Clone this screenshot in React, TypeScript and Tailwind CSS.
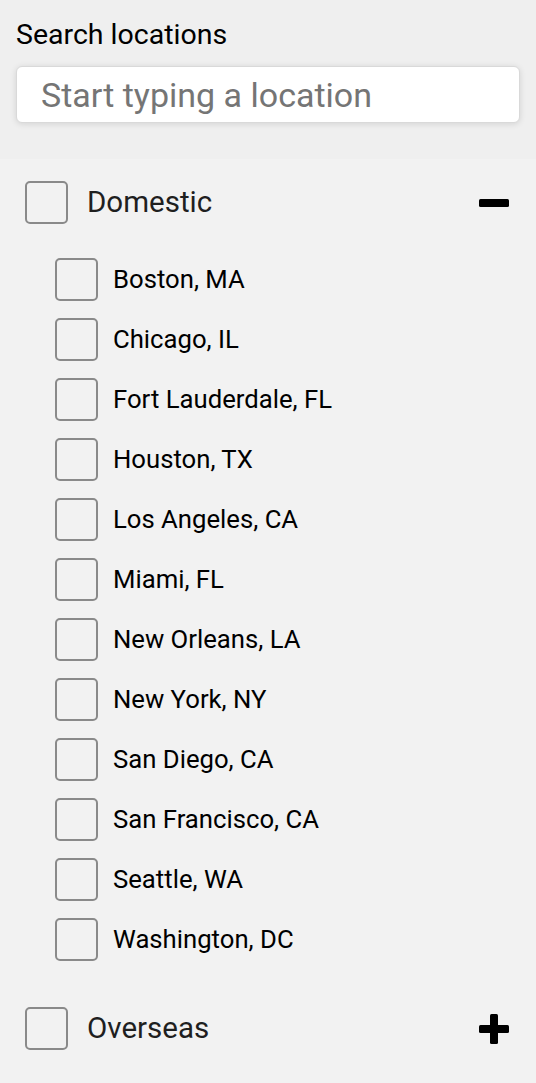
import { useState } from "react";

const cities = [
    "Boston, MA",
    "Chicago, IL",
    "Fort Lauderdale, FL",
    "Houston, TX",
    "Los Angeles, CA",
    "Miami, FL",
    "New Orleans, LA",
    "New York, NY",
    "San Diego, CA",
    "San Francisco, CA",
    "Seattle, WA",
    "Washington, DC",
]

const Box = () => (
    <span className="block w-[43px] h-[43px] shrink-0 rounded-[5px] border-2 border-[#8a8a8a] bg-[#f2f2f2]" />
)

const Minus = () => (
    <svg width="30" height="30" viewBox="0 0 30 30">
        <rect x="0" y="11" width="30" height="8" rx="1.5" fill="#000" />
    </svg>
)

const Plus = () => (
    <svg width="30" height="30" viewBox="0 0 30 30">
        <rect x="0" y="11" width="30" height="8" rx="1.5" fill="#000" />
        <rect x="11" y="0" width="8" height="30" rx="1.5" fill="#000" />
    </svg>
)

const App = () => {
    const [query, setQuery] = useState("")
    const [domesticOpen, setDomesticOpen] = useState(true)
    const [overseasOpen, setOverseasOpen] = useState(false)

    return (
        <div className="min-h-screen w-full bg-[#efefef] font-['Roboto',sans-serif]">
            <div className="px-4 pt-[18px] pb-[36px]">
                <label htmlFor="search" className="block text-[28.5px] leading-[34px] text-black">Search locations</label>
                <input
                    id="search"
                    className="mt-[14px] w-full h-[57px] rounded-[6px] border border-[#d9d9d9] bg-white pl-[24px] text-[34px] text-black placeholder:text-[#757575] shadow-[0_1px_6px_rgba(0,0,0,0.12)] outline-none"
                    placeholder="Start typing a location"
                    value={query}
                    onChange={(e) => setQuery(e.target.value)}
                />
            </div>
            <div className="bg-[#f2f2f2] pl-[25px] pr-[27px] pt-[22px]">
                <div className="flex items-center h-[43px]">
                    <Box />
                    <span className="ml-[19px] text-[29.5px] text-[#1f1f1f] flex-1">Domestic</span>
                    <button onClick={() => setDomesticOpen(!domesticOpen)}>
                        {domesticOpen ? <Minus /> : <Plus />}
                    </button>
                </div>
                {domesticOpen && (
                    <div className="pl-[30px] pt-[34px] flex flex-col gap-[17px]">
                        {cities.map((city) => (
                            <div key={city} className="flex items-center h-[43px]">
                                <Box />
                                <span className="ml-[15px] text-[25.7px] text-black">{city}</span>
                            </div>
                        ))}
                    </div>
                )}
                <div className="flex items-center h-[43px] mt-[46px] pb-[40px] box-content">
                    <Box />
                    <span className="ml-[19px] text-[29.5px] text-[#1f1f1f] flex-1">Overseas</span>
                    <button onClick={() => setOverseasOpen(!overseasOpen)}>
                        {overseasOpen ? <Minus /> : <Plus />}
                    </button>
                </div>
            </div>
        </div>
    )
}
export default App
